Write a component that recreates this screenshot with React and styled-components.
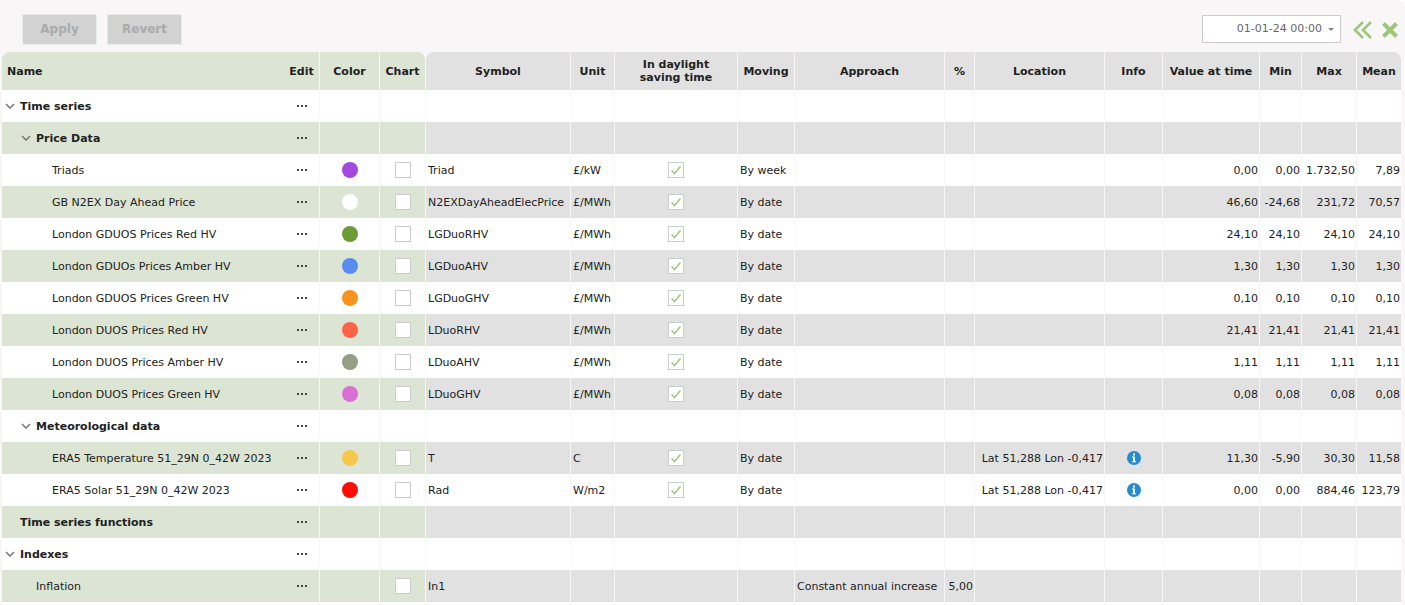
import React from "react";
import styled, { createGlobalStyle } from "styled-components";

const GlobalStyle = createGlobalStyle`
  *, *::before, *::after { box-sizing: border-box; }
  body {
    margin: 0;
    background: #fff;
    color: #212121;
    font: 11px/13px Verdana, "DejaVu Sans", sans-serif;
  }
`;

const Panel = styled.main`
  height: 100vh;
  overflow: hidden;
  padding: 0 4px 0 2px;
  background: #f8f6f7;
  border-top-right-radius: 8px;
`;

const Toolbar = styled.header`
  display: flex;
  align-items: center;
  gap: 10px;
  height: 52px;
  padding: 6px 0 0 20px;
`;

const ToolButton = styled.button`
  width: 75px;
  height: 31px;
  padding: 0;
  border: 1px solid #e8ebe8;
  background: #d2d2d2;
  color: #aaa;
  font: bold 12px/16px Verdana, "DejaVu Sans", sans-serif;
`;

const DateField = styled.label`
  display: grid;
  align-items: center;
  width: 139px;
  height: 28px;
  margin-left: auto;
  border: 1px solid #ccc;
  background: #fff;

  > * { grid-area: 1 / 1; }
  svg { justify-self: end; margin-right: 6px; pointer-events: none; }
`;

const DateSelect = styled.select`
  appearance: none;
  width: 100%;
  height: 26px;
  padding: 0 18px 0 0;
  border: 0;
  background: transparent;
  color: #666;
  font: 11px/16px Verdana, "DejaVu Sans", sans-serif;
  text-align: right;
  text-align-last: right;
`;

const PanelActions = styled.div`
  display: flex;
  align-items: center;
  gap: 9px;
  padding: 2px 3px 0 2px;
`;

const IconButton = styled.button`
  display: grid;
  place-items: center;
  padding: 0;
  border: 0;
  background: transparent;
  color: #9cc77b;
  cursor: pointer;
`;

const Grid = styled.table`
  width: 100%;
  table-layout: fixed;
  border-collapse: separate;
  border-spacing: 0;
`;

const Column = styled.col`
  width: ${(p) => (p.$width ? `${p.$width}px` : "auto")};
`;

const HeadCell = styled.th`
  height: 38px;
  padding: 0 ${(p) => p.$inset || 0}px;
  border-right: ${(p) => (p.$line ? "1px solid #f8f6f7" : "0")};
  border-radius: ${(p) => p.$corners || 0};
  background: ${(p) => (p.$fixed ? "#dce5d4" : "#e1e1e1")};
  font-weight: bold;
  text-align: center;
  &:first-child { padding-left: 5px; text-align: left; }
`;

const Row = styled.tr`
  --fixed: #fff;
  --data: #fff;
  &:nth-child(even) { --fixed: #dce5d4; --data: #e1e1e1; }
`;

const Cell = styled.td`
  height: 32px;
  padding: 0 ${(p) => (p.$align === "right" ? 1 : 2)}px 0 2px;
  border-right: ${(p) => (p.$line ? "1px solid #f7f7f7" : "0")};
  background: var(${(p) => (p.$fixed ? "--fixed" : "--data")});
  text-align: ${(p) => p.$align || "left"};
  white-space: nowrap;
`;

const NameCell = styled.th`
  height: 32px;
  padding: 0 0 0 ${(p) => p.$level * 16}px;
  background: var(--fixed);
  font-weight: ${(p) => (p.$group ? "bold" : "normal")};
  text-align: left;
  white-space: nowrap;
`;

const NameLine = styled.div`
  display: flex;
  align-items: center;
  gap: 2px;
`;

const ToggleSlot = styled.span`
  display: grid;
  place-items: center;
  width: 16px;
  height: 16px;
`;

const Toggle = styled(IconButton)`
  width: 16px;
  height: 16px;
  color: #777;
`;

const EditButton = styled(IconButton)`
  width: 100%;
  height: 16px;
  color: #444;
`;

const Swatch = styled.span`
  display: block;
  width: 16px;
  height: 16px;
  margin: 0 auto;
  border-radius: 50%;
  background: ${(p) => p.$color};
`;

const CheckBox = styled.span`
  display: grid;
  width: 16px;
  height: 16px;
  margin: 0 auto;
  > * { grid-area: 1 / 1; }
  svg { pointer-events: none; }
`;

const CheckInput = styled.input`
  appearance: none;
  width: 16px;
  height: 16px;
  margin: 0;
  border: 1px solid #ccc;
  background: #fff;
`;

const Check = ({ label, checked }) => (
  <CheckBox>
    <CheckInput type="checkbox" aria-label={label} defaultChecked={checked} />
    {checked && (
      <svg width="16" height="16" fill="none" stroke="#9cc77b" strokeWidth="1.5">
        <path d="M3.5 8.5 6.5 11.5 12.5 4.5" />
      </svg>
    )}
  </CheckBox>
);

const InfoIcon = () => (
  <svg width="14" height="14" viewBox="0 0 14 14">
    <circle cx="7" cy="7" r="7" fill="#1f8dd0" />
    <path d="M6 2.5h2v2H6zM5 5.5h3v4.5h1v1.3H5V10h1V6.8H5z" fill="#fff" />
  </svg>
);

const columns = [
  { title: "Name", fixed: true, corners: "8px 0 0 0" },
  { title: "Edit", width: 36, fixed: true, line: true },
  { title: "Color", width: 60, fixed: true, line: true },
  { title: "Chart", width: 46, fixed: true, line: true, corners: "0 8px 0 0" },
  { title: "Symbol", width: 145, line: true, corners: "8px 0 0 0" },
  { title: "Unit", width: 44, line: true },
  { title: "In daylight saving time", width: 123, line: true, inset: 20 },
  { title: "Moving", width: 57, line: true },
  { title: "Approach", width: 150, line: true },
  { title: "%", width: 30, line: true },
  { title: "Location", width: 130, line: true },
  { title: "Info", width: 58, line: true },
  { title: "Value at time", width: 97, line: true },
  { title: "Min", width: 42, line: true },
  { title: "Max", width: 55, line: true },
  { title: "Mean", width: 44, corners: "0 8px 0 0" },
];

const group = (name, level, toggle = true) => ({ name, level, group: true, toggle });
const series = (name, color, symbol, unit, moving, values, location) => ({
  name, level: 2, color, chart: true, symbol, unit, dst: true, moving, values, location,
});
const place = "Lat 51,288 Lon -0,417";

const rows = [
  group("Time series", 0),
  group("Price Data", 1),
  series("Triads", "#a349e0", "Triad", "£/kW", "By week", ["0,00", "0,00", "1.732,50", "7,89"]),
  series("GB N2EX Day Ahead Price", "#ffffff", "N2EXDayAheadElecPrice", "£/MWh", "By date", ["46,60", "-24,68", "231,72", "70,57"]),
  series("London GDUOS Prices Red HV", "#6a9b35", "LGDuoRHV", "£/MWh", "By date", ["24,10", "24,10", "24,10", "24,10"]),
  series("London GDUOs Prices Amber HV", "#558ced", "LGDuoAHV", "£/MWh", "By date", ["1,30", "1,30", "1,30", "1,30"]),
  series("London GDUOS Prices Green HV", "#f79420", "LGDuoGHV", "£/MWh", "By date", ["0,10", "0,10", "0,10", "0,10"]),
  series("London DUOS Prices Red HV", "#ff6347", "LDuoRHV", "£/MWh", "By date", ["21,41", "21,41", "21,41", "21,41"]),
  series("London DUOS Prices Amber HV", "#959d83", "LDuoAHV", "£/MWh", "By date", ["1,11", "1,11", "1,11", "1,11"]),
  series("London DUOS Prices Green HV", "#da70d6", "LDuoGHV", "£/MWh", "By date", ["0,08", "0,08", "0,08", "0,08"]),
  group("Meteorological data", 1),
  series("ERA5 Temperature 51_29N 0_42W 2023", "#f5c84c", "T", "C", "By date", ["11,30", "-5,90", "30,30", "11,58"], place),
  series("ERA5 Solar 51_29N 0_42W 2023", "#fb0d00", "Rad", "W/m2", "By date", ["0,00", "0,00", "884,46", "123,79"], place),
  group("Time series functions", 0, false),
  group("Indexes", 0),
  { name: "Inflation", level: 1, chart: true, symbol: "In1", approach: "Constant annual increase", percent: "5,00" },
];

const DataRow = ({ row }) => {
  const values = row.values || ["", "", "", ""];
  return (
    <Row>
      <NameCell scope="row" $level={row.level} $group={row.group}>
        <NameLine>
          {row.toggle ? (
            <Toggle type="button" aria-label={`Collapse ${row.name}`}>
              <svg width="10" height="6" fill="none" stroke="currentColor" strokeWidth="1.5">
                <path d="M1 1 5 5 9 1" />
              </svg>
            </Toggle>
          ) : (
            <ToggleSlot />
          )}
          {row.name}
        </NameLine>
      </NameCell>
      <Cell $fixed $line>
        <EditButton type="button" aria-label={`Edit ${row.name}`}>
          <svg width="10" height="2" fill="currentColor">
            <path d="M0 0h2v2H0zM4 0h2v2H4zM8 0h2v2H8z" />
          </svg>
        </EditButton>
      </Cell>
      <Cell $fixed $line>{row.color && <Swatch $color={row.color} />}</Cell>
      <Cell $fixed $line>{row.chart && <Check label={`Chart ${row.name}`} />}</Cell>
      <Cell $line>{row.symbol}</Cell>
      <Cell $line>{row.unit}</Cell>
      <Cell $line>{row.dst && <Check label={`${row.name} in daylight saving time`} checked />}</Cell>
      <Cell $line>{row.moving}</Cell>
      <Cell $line>{row.approach}</Cell>
      <Cell $line $align="right">{row.percent}</Cell>
      <Cell $line $align="right">{row.location}</Cell>
      <Cell $line>
        {row.location && (
          <EditButton type="button" aria-label={`Info on ${row.name}`}><InfoIcon /></EditButton>
        )}
      </Cell>
      {values.map((value, i) => (
        <Cell key={i} $align="right" $line={i < 3}>{value}</Cell>
      ))}
    </Row>
  );
};

export default function App() {
  return (
    <>
      <GlobalStyle />
      <Panel>
        <Toolbar>
          <ToolButton type="button" disabled>Apply</ToolButton>
          <ToolButton type="button" disabled>Revert</ToolButton>
          <DateField>
            <DateSelect aria-label="Time" defaultValue="01-01-24 00:00">
              <option>01-01-24 00:00</option>
            </DateSelect>
            <svg width="6" height="3" fill="#888"><path d="M0 0h6L3 3z" /></svg>
          </DateField>
          <PanelActions>
            <IconButton type="button" aria-label="Collapse panel">
              <svg width="20" height="18" fill="none" stroke="currentColor" strokeWidth="2.5">
                <path d="M10 1 2 9 10 17M18 1 10 9 18 17" />
              </svg>
            </IconButton>
            <IconButton type="button" aria-label="Close">
              <svg width="16" height="16" fill="none" stroke="currentColor" strokeWidth="4">
                <path d="M1.5 1.5 14.5 14.5M14.5 1.5 1.5 14.5" />
              </svg>
            </IconButton>
          </PanelActions>
        </Toolbar>
        <Grid>
          <colgroup>
            {columns.map((c) => <Column key={c.title} $width={c.width} />)}
          </colgroup>
          <thead>
            <tr>
              {columns.map((c) => (
                <HeadCell key={c.title} scope="col" $fixed={c.fixed} $line={c.line} $corners={c.corners} $inset={c.inset}>
                  {c.title}
                </HeadCell>
              ))}
            </tr>
          </thead>
          <tbody>
            {rows.map((row) => <DataRow key={row.name} row={row} />)}
            <Row>
              {columns.map((c) => <Cell key={c.title} $fixed={c.fixed} $line={c.line} />)}
            </Row>
          </tbody>
        </Grid>
      </Panel>
    </>
  );
}
